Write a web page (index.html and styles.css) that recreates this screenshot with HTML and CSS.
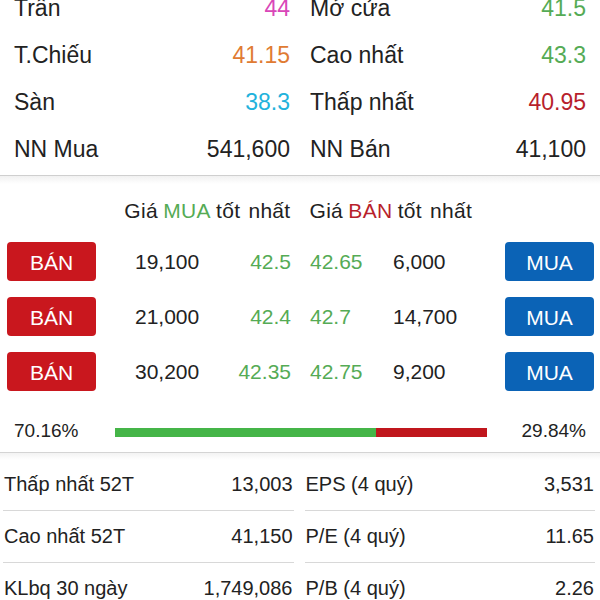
FILE: index.html
```html
<!DOCTYPE html>
<html lang="vi">
<head>
    <meta charset="UTF-8">
    <meta name="viewport" content="width=device-width, initial-scale=1.0">
    <title>Bảng giá</title>
    <link rel="stylesheet" href="styles.css">
</head>
<body>
    <div class="quote-info">
        <div class="info-row"><span>Trần</span><span class="ceil">44</span></div>
        <div class="info-row"><span>Mở cửa</span><span class="up">41.5</span></div>
        <div class="info-row"><span>T.Chiếu</span><span class="ref">41.15</span></div>
        <div class="info-row"><span>Cao nhất</span><span class="up">43.3</span></div>
        <div class="info-row"><span>Sàn</span><span class="floor">38.3</span></div>
        <div class="info-row"><span>Thấp nhất</span><span class="down">40.95</span></div>
        <div class="info-row"><span>NN Mua</span><span>541,600</span></div>
        <div class="info-row"><span>NN Bán</span><span>41,100</span></div>
    </div>

    <div class="order-book">
        <div class="book-head">
            <div class="half bid-head">Giá <span class="up">MUA</span> tốt nhất</div>
            <div class="half ask-head">Giá <span class="down">BÁN</span> tốt nhất</div>
        </div>

        <div class="book-row">
            <div class="half bid">
                <button class="btn btn-sell">BÁN</button>
                <span class="qty">19,100</span>
                <span class="price up">42.5</span>
            </div>
            <div class="half ask">
                <span class="price up">42.65</span>
                <span class="qty">6,000</span>
                <button class="btn btn-buy">MUA</button>
            </div>
        </div>

        <div class="book-row">
            <div class="half bid">
                <button class="btn btn-sell">BÁN</button>
                <span class="qty">21,000</span>
                <span class="price up">42.4</span>
            </div>
            <div class="half ask">
                <span class="price up">42.7</span>
                <span class="qty">14,700</span>
                <button class="btn btn-buy">MUA</button>
            </div>
        </div>

        <div class="book-row">
            <div class="half bid">
                <button class="btn btn-sell">BÁN</button>
                <span class="qty">30,200</span>
                <span class="price up">42.35</span>
            </div>
            <div class="half ask">
                <span class="price up">42.75</span>
                <span class="qty">9,200</span>
                <button class="btn btn-buy">MUA</button>
            </div>
        </div>

        <div class="ratio">
            <span class="ratio-left">70.16%</span>
            <div class="ratio-bar">
                <div class="ratio-buy" style="width: 70.16%"></div>
                <div class="ratio-sell"></div>
            </div>
            <span class="ratio-right">29.84%</span>
        </div>
    </div>

    <div class="stats">
        <div class="stat-row"><span>Thấp nhất 52T</span><span>13,003</span></div>
        <div class="stat-row"><span>EPS (4 quý)</span><span>3,531</span></div>
        <div class="stat-row"><span>Cao nhất 52T</span><span>41,150</span></div>
        <div class="stat-row"><span>P/E (4 quý)</span><span>11.65</span></div>
        <div class="stat-row"><span>KLbq 30 ngày</span><span>1,749,086</span></div>
        <div class="stat-row"><span>P/B (4 quý)</span><span>2.26</span></div>
    </div>
</body>
</html>
```

FILE: styles.css
```css
body {
    margin: 0;
    background-color: #fff;
    font-family: "Liberation Sans", Arial, sans-serif;
    color: #222;
    overflow: hidden;
}

.up { color: #55ab55; }
.down { color: #b81f2c; }
.ceil { color: #d946b8; }
.ref { color: #e07b33; }
.floor { color: #22b2dc; }

/* top info */
.quote-info {
    margin-top: -15px;
    display: grid;
    grid-template-columns: 1fr 1fr;
    column-gap: 20px;
    padding: 0 14px 2px;
    font-size: 23px;
    border-bottom: 1px solid #cfcfcf;
}

.info-row {
    display: flex;
    justify-content: space-between;
    align-items: center;
    height: 47px;
}

/* order book */
.order-book {
    padding-top: 15px;
    font-size: 21px;
    background: linear-gradient(#f1f1f1, #fff 8px);
    border-bottom: 1px solid #d4d4d4;
}

.book-head,
.book-row {
    display: flex;
}

.half {
    width: 50%;
    display: flex;
    align-items: center;
}

.book-head {
    height: 40px;
    line-height: 40px;
    margin-bottom: 3px;
    word-spacing: 2px;
    letter-spacing: 0.3px;
}

.bid-head {
    justify-content: flex-end;
    padding-right: 9px;
}

.ask-head {
    padding-left: 10px;
}

.bid-head .up,
.ask-head .down {
    margin: 0 0.25em;
}

.book-row {
    height: 55px;
}

.bid {
    padding-left: 7px;
    padding-right: 10px;
}

.ask {
    padding-left: 9px;
    padding-right: 6px;
}

.btn {
    width: 89px;
    height: 39px;
    border: none;
    border-radius: 4px;
    color: #fff;
    font-family: inherit;
    font-size: 21px;
    padding: 2px 0 0;
}

.btn-sell {
    background-color: #c9171e;
}

.btn-buy {
    background-color: #0b63b6;
    margin-left: auto;
}

.bid .qty {
    margin-left: 39px;
}

.bid .price {
    margin-left: auto;
}

.ask .price {
    width: 83px;
}

.ratio {
    display: flex;
    align-items: center;
    padding: 14px 14px 3px 14px;
    height: 36px;
    font-size: 19px;
}

.ratio-left {
    width: 101px;
}

.ratio-right {
    width: 99px;
    text-align: right;
}

.ratio-bar {
    flex: 1;
    display: flex;
    height: 9px;
    margin-top: 3px;
}

.ratio-buy {
    background-color: #45b548;
}

.ratio-sell {
    flex: 1;
    background-color: #c0161d;
}

/* bottom stats */
.stats {
    display: grid;
    grid-template-columns: 1fr 1fr;
    column-gap: 11px;
    padding: 6px 5px 0 3px;
    background: linear-gradient(#f3f3f3, #fff 7px);
    font-size: 20px;
}

.stat-row {
    display: flex;
    justify-content: space-between;
    align-items: center;
    height: 51px;
    padding: 0 1px 0 1px;
    border-bottom: 1px solid #d8d8d8;
}
```
